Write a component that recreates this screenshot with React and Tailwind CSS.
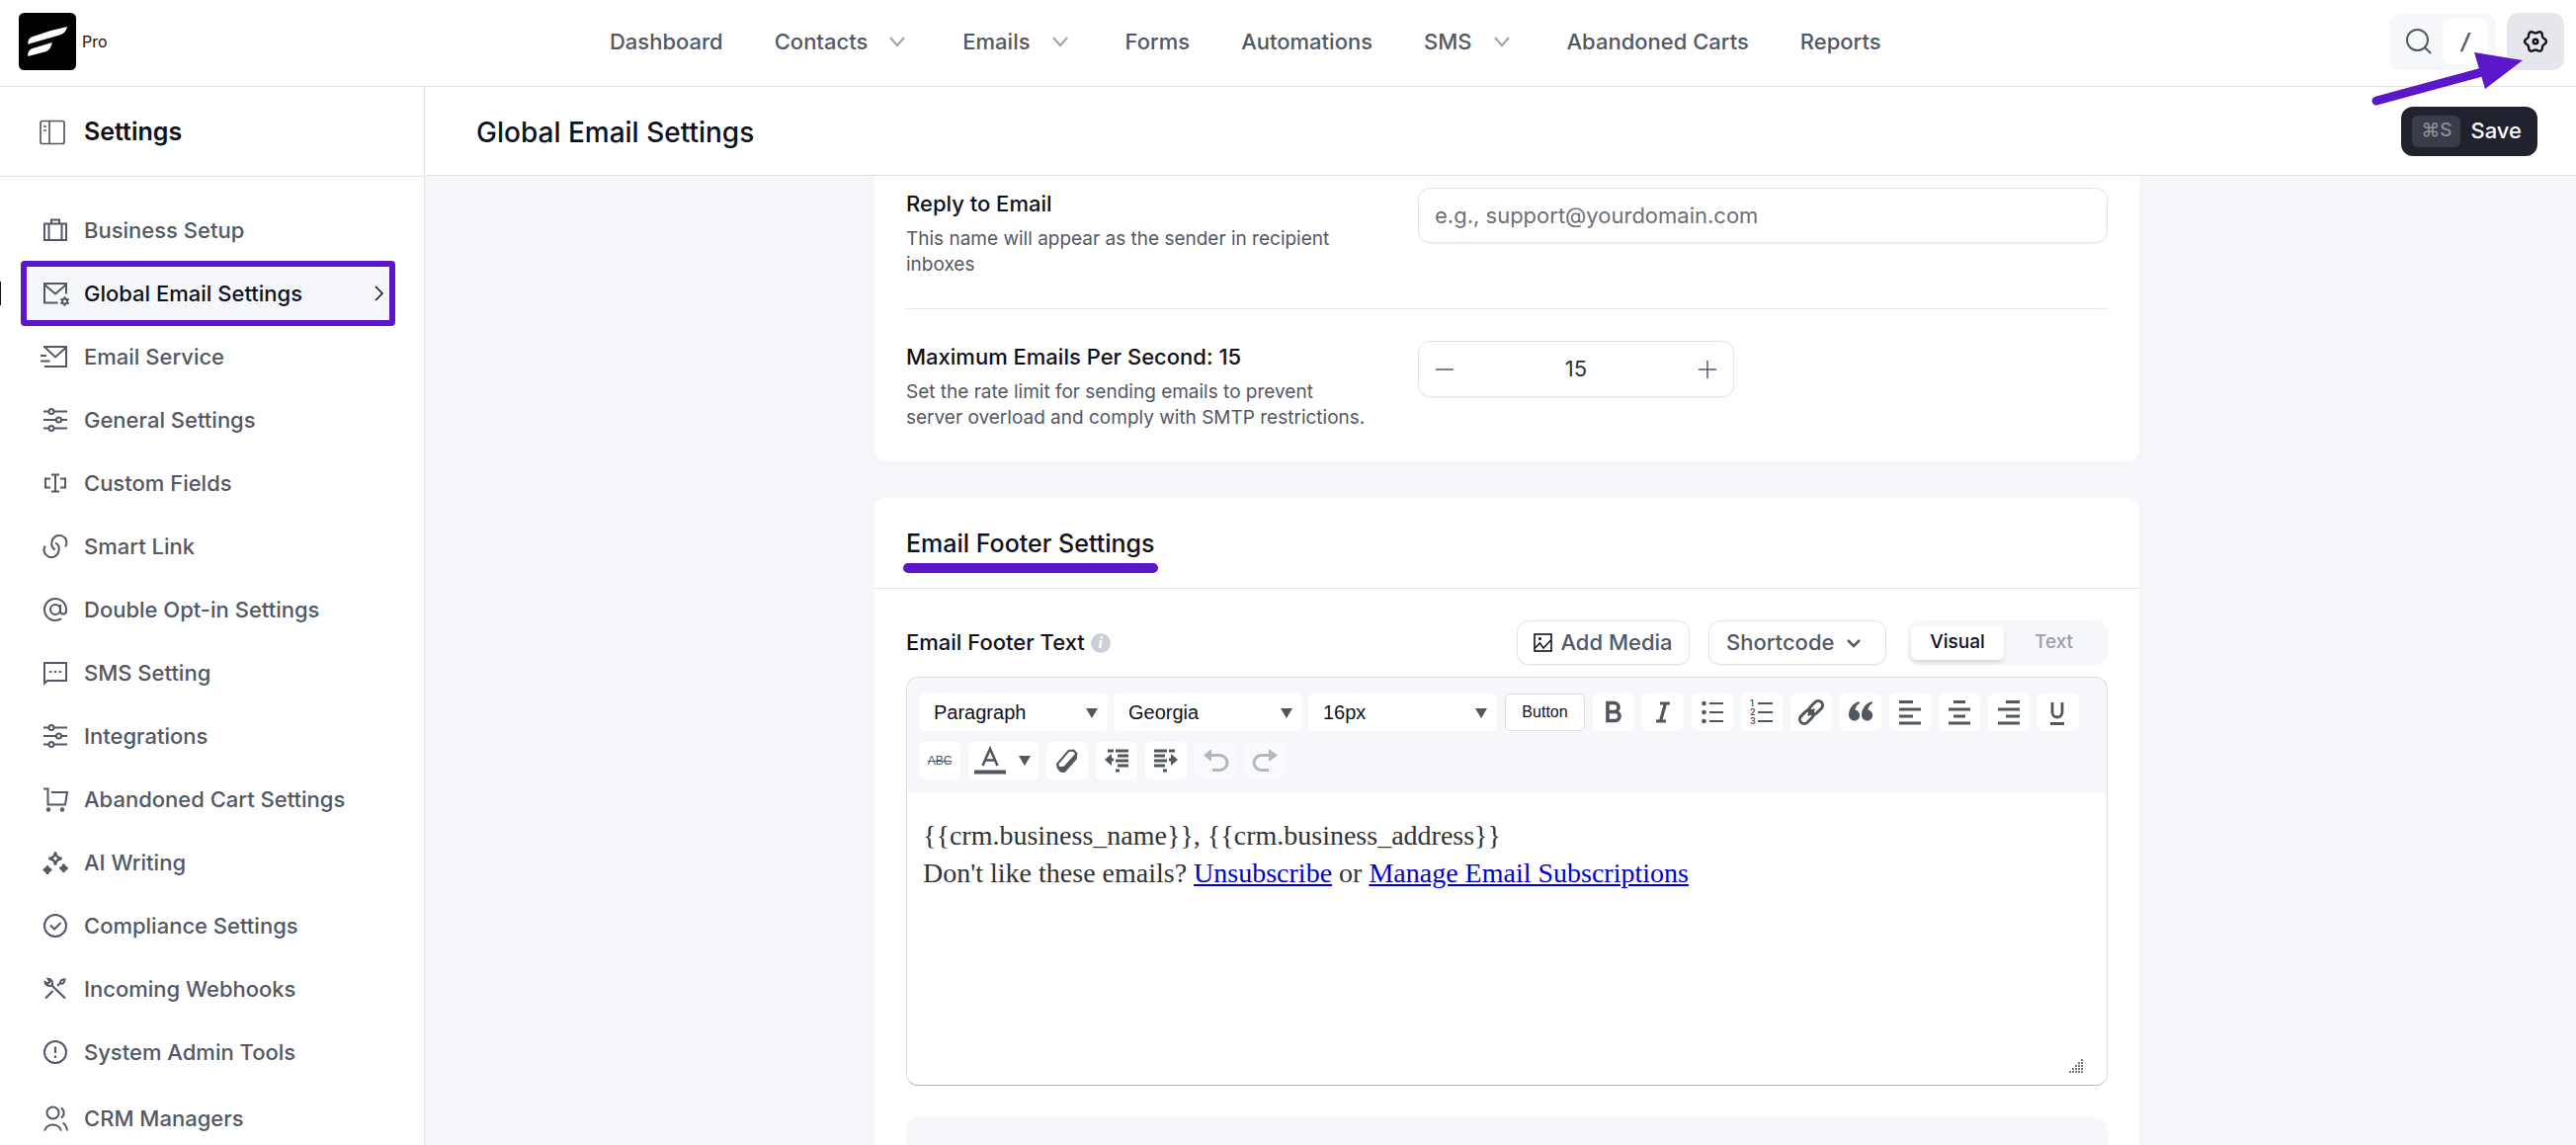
import { useState } from 'react'

function Icon({ children, className = 'size-6', strokeWidth = 2, viewBox = '0 0 24 24' }) {
  return (
    <svg
      className={`shrink-0 overflow-visible ${className}`}
      viewBox={viewBox}
      fill="none"
      stroke="currentColor"
      strokeWidth={strokeWidth}
      aria-hidden="true"
    >
      {children}
    </svg>
  )
}

// Builds the wavy outline of a six-toothed gear
function gearPath(cx, cy, radius, depth) {
  const points = []
  for (let i = 0; i < 72; i++) {
    const angle = (i / 72) * Math.PI * 2
    const r = radius + depth * Math.cos(angle * 6)
    points.push(`${(cx + r * Math.cos(angle)).toFixed(2)} ${(cy + r * Math.sin(angle)).toFixed(2)}`)
  }
  return `M${points.join('L')}Z`
}

const sliders = (
  <>
    <path d="M0 3.5h5.5M10.5 3.5H24M0 12h13M18 12h6M0 20.5h5.5M10.5 20.5H24" />
    <circle cx="8" cy="3.5" r="2.5" />
    <circle cx="15.5" cy="12" r="2.5" />
    <circle cx="8" cy="20.5" r="2.5" />
  </>
)

const menuItems = [
  {
    label: 'Business Setup',
    icon: <path d="M1 5.5h22v16.5H1zM5.5 5.5V22M18.5 5.5V22M8 5.5v-4h8v4" />,
  },
  {
    label: 'Global Email Settings',
    active: true,
    icon: (
      <>
        <path d="M14.5 21.5H1V2h22v10.5M1 3l11 9.5L23 3" />
        <circle cx="21.5" cy="20" r="2.6" />
        <path d="M21.5 15.3v2M21.5 22.7v2M17.4 17.6l1.8 1M23.8 21.4l1.8 1M17.4 22.4l1.8-1M23.8 18.6l1.8-1" />
      </>
    ),
  },
  {
    label: 'Email Service',
    icon: <path d="M0 2h23v20H1M1.500 2.500l10.500 10L23 2.500M-3 11h6M-3 16.500h9.500" />,
  },
  { label: 'General Settings', icon: sliders },
  {
    label: 'Custom Fields',
    icon: <path d="M7 7.500H2v9h5M17 7.500h5v9h-5M12 3.500v17M8 3.500h8M8 20.500h8" />,
  },
  {
    label: 'Smart Link',
    icon: (
      <>
        <path d="M22.300 12.500A7.500 7.500 0 1 0 8.600 7.200C7.600 10.500 8.500 13.500 11.800 15.500" />
        <path d="M1.700 11.500A7.500 7.500 0 1 0 15.400 16.800C16.400 13.500 15.500 10.500 12.200 8.500" />
      </>
    ),
  },
  {
    label: 'Double Opt-in Settings',
    icon: (
      <>
        <circle cx="12" cy="12" r="5" />
        <path d="M17 7v6.500a3 3 0 0 0 6 0V12a11 11 0 1 0-5 9.200" />
      </>
    ),
  },
  {
    label: 'SMS Setting',
    icon: (
      <>
        <path d="M1 22.500V2h22v18H4z" />
        <path d="M6 11h2.200M10.900 11h2.200M15.800 11H18" strokeWidth={2.2} />
      </>
    ),
  },
  { label: 'Integrations', icon: sliders },
  {
    label: 'Abandoned Cart Settings',
    icon: (
      <>
        <path d="M0 1.500h4.500V17.500H22L24 5H8" />
        <circle cx="5" cy="22.500" r="1.200" />
        <circle cx="19" cy="22.500" r="1.200" />
      </>
    ),
  },
  {
    label: 'AI Writing',
    icon: (
      <>
        <path d="M12 1.500c.8 4.500 2 5.700 6.500 6.500-4.500.8-5.700 2-6.500 6.500-.8-4.500-2-5.700-6.500-6.500 4.500-.8 5.700-2 6.500-6.500z" strokeWidth={2.400} />
        <path
          d="M4 15.500c.6 2.800 1.300 3.500 4.100 4.100-2.800.6-3.500 1.300-4.100 4.100-.6-2.800-1.300-3.500-4.100-4.100 2.800-.6 3.500-1.300 4.100-4.100zM20.500 13.700c.6 2.800 1.300 3.500 4.100 4.100-2.800.6-3.500 1.300-4.100 4.100-.6-2.800-1.300-3.500-4.100-4.100 2.800-.6 3.500-1.300 4.100-4.100z"
          fill="currentColor"
        />
      </>
    ),
  },
  {
    label: 'Compliance Settings',
    icon: (
      <>
        <circle cx="12" cy="12" r="11" />
        <path d="M7 11.500l4 4 6.500-6.500" />
      </>
    ),
  },
  {
    label: 'Incoming Webhooks',
    icon: (
      <>
        <path d="M8 8l14 13.500M2 21.500l7.500-7.500" strokeWidth={2.2} />
        <path d="M4.500 1.800A4.500 4.500 0 0 1 8.800 8 4.500 4.500 0 0 1 1.500 5l3 1.700 1.900-1.900z" />
        <path d="M14 9l3-3c0-2 1.500-3.500 4.500-3.700-.2 3-1.700 4.700-4 4.700" />
      </>
    ),
  },
  {
    label: 'System Admin Tools',
    icon: (
      <>
        <circle cx="12" cy="12" r="11" />
        <path d="M12 6.500v6.500M12 15.500v2.500" strokeWidth={2.2} />
      </>
    ),
  },
]

const managerItem = {
  label: 'CRM Managers',
  icon: (
    <>
      <circle cx="9.500" cy="6.500" r="6" />
      <path d="M1 24.500a9 9 0 0 1 17 0M18 1.500a6 6 0 0 1 0 10M19.500 16.500c2.500 1.500 4 4 4.500 8" />
    </>
  ),
}

const topLinks = [
  { label: 'Dashboard' },
  { label: 'Contacts', menu: true },
  { label: 'Emails', menu: true },
  { label: 'Forms' },
  { label: 'Automations' },
  { label: 'SMS', menu: true },
  { label: 'Abandoned Carts' },
  { label: 'Reports' },
]

function TopBar() {
  return (
    <header className="flex h-[88px] shrink-0 items-center justify-between border-b border-[#dfe1e5] bg-white pb-[3px] pl-[19px] pr-3">
      <div className="flex items-center gap-[6px]">
        <svg className="size-[58px]" viewBox="0 0 174 174" aria-label="FluentCRM" role="img">
          <rect width="174" height="174" rx="16" fill="#000" />
          <path d="M28 95V88Q30 76 43 72Q95 52 147 42Q144 60 126 67Z" fill="#fff" />
          <path d="M28 132V124Q30 112 42 108L101 90Q98 110 84 117Z" fill="#fff" />
        </svg>
        <span className="text-[16px] text-[#0e121b]">Pro</span>
      </div>

      <nav className="flex items-center gap-[52px] pr-[6px]">
        {topLinks.map((link) => (
          <a
            key={link.label}
            href="#"
            className="flex items-center gap-4 text-[22px] font-medium text-[#525866]"
          >
            {link.label}
            {link.menu && (
              <Icon className="size-7 text-[#a3a6ad]" strokeWidth={2.2} viewBox="0 0 28 28">
                <path d="M7 10l7 8 7-8" />
              </Icon>
            )}
          </a>
        ))}
      </nav>

      <div className="flex items-center gap-[11px]">
        <button type="button" aria-label="Search" className="flex h-[58px] items-center rounded-xl bg-[#f5f7fa] pl-4 pr-2 text-[#525866]">
          <Icon className="size-7" strokeWidth={2} viewBox="0 0 28 28">
            <circle cx="12.500" cy="12.500" r="10.500" />
            <path d="M20 20l6 6" />
          </Icon>
          <kbd className="ml-[10px] flex h-[46px] w-[46px] items-center justify-center rounded-lg bg-white font-['Inter',sans-serif] text-[22px] font-semibold italic">
            /
          </kbd>
        </button>
        <button type="button" aria-label="Settings" className="flex size-[58px] items-center justify-center rounded-xl bg-[#e5e7ec] text-[#0e121b]">
          <Icon strokeWidth={2.4}>
            <path d={gearPath(12, 12, 9.7, 1.2)} />
            <circle cx="12" cy="12" r="2.300" />
          </Icon>
        </button>
      </div>
    </header>
  )
}

function MenuItem({ item }) {
  return (
    <li>
      <a
        href="#"
        className={`relative flex h-16 items-center pl-[23px] pr-[11px] text-[22px] font-medium ${
          item.active ? 'bg-[#f5f7fa] text-[#0e121b]' : 'text-[#525866]'
        }`}
      >
        <Icon className="size-6 text-[#525866]">{item.icon}</Icon>
        <span className="ml-[17px] flex-1">{item.label}</span>
        {item.active && (
          <>
            <Icon className="h-4 w-[10px]" strokeWidth={1.5} viewBox="0 0 10 16">
              <path d="M1 1l7 7-7 7" />
            </Icon>
            <span className="absolute -left-[21px] top-5 h-6 w-px bg-[#0e121b]" />
            <span className="absolute inset-x-0 -inset-y-px rounded-[4px] border-[6px] border-[#5b17c9]" />
          </>
        )}
      </a>
    </li>
  )
}

function Sidebar() {
  return (
    <aside className="flex w-[430px] shrink-0 flex-col border-r border-[#dfe1e5] bg-white">
      <div className="flex h-[91px] shrink-0 items-center gap-[19px] border-b border-[#dfe1e5] pl-10 pt-[2px] text-[#0e121b]">
        <Icon className="size-[26px] text-[#525866]" strokeWidth={1.7} viewBox="0 0 26 26">
          <rect x="1" y="1.500" width="24" height="23" rx="2" />
          <path d="M10 1.500v23M4 7h3M4 11h3" />
        </Icon>
        <h2 className="text-[25px] font-semibold">Settings</h2>
      </div>
      <ul className="pl-[21px] pr-[29px] pt-[22px]">
        {menuItems.map((item) => (
          <MenuItem key={item.label} item={item} />
        ))}
      </ul>
      <ul className="pl-[21px] pr-[29px] pt-[3px]">
        <MenuItem item={managerItem} />
      </ul>
    </aside>
  )
}

function SettingRow({ id, label, help, children, className }) {
  return (
    <div className={`grid grid-cols-[470px_1fr] gap-12 ${className}`}>
      <div>
        <label htmlFor={id} className="block text-[22px] font-medium leading-8 text-[#0e121b]">
          {label}
        </label>
        <p className="mt-[7px] text-[19px] leading-[26px] text-[#525866]">{help}</p>
      </div>
      <div>{children}</div>
    </div>
  )
}

function RateStepper({ value, onChange }) {
  return (
    <div className="flex h-[57px] w-[320px] items-center rounded-xl border border-[#e1e4ea] px-[17px] text-[#525866] shadow-xs">
      <button type="button" aria-label="Decrease" onClick={() => onChange(Math.max(1, value - 1))}>
        <Icon className="size-[18px]" strokeWidth={1.5} viewBox="0 0 18 18">
          <path d="M0 9h18" />
        </Icon>
      </button>
      <input
        id="rate"
        value={value}
        onChange={(e) => onChange(Number(e.target.value) || 1)}
        className="min-w-0 flex-1 text-center text-[22px] text-[#2b303b] outline-none"
      />
      <button type="button" aria-label="Increase" onClick={() => onChange(value + 1)}>
        <Icon className="size-[18px]" strokeWidth={1.5} viewBox="0 0 18 18">
          <path d="M0 9h18M9 0v18" />
        </Icon>
      </button>
    </div>
  )
}

function ToolSelect({ label, options }) {
  return (
    <div className="relative">
      <select
        aria-label={label}
        className="h-[38px] w-[191px] appearance-none rounded-md bg-white pl-[15px] font-['Liberation_Sans',sans-serif] text-[20px] text-[#0e121b]"
      >
        {options.map((option) => (
          <option key={option}>{option}</option>
        ))}
      </select>
      <svg className="pointer-events-none absolute right-[10px] top-[15px] h-[10px] w-3" viewBox="0 0 12 10" aria-hidden="true">
        <path d="M0 0h12L6 10z" fill="#50575e" />
      </svg>
    </div>
  )
}

function ToolButton({ label, disabled, children }) {
  return (
    <button
      type="button"
      aria-label={label}
      disabled={disabled}
      className={`flex h-[38px] w-[42px] items-center justify-center rounded-md ${
        disabled ? 'bg-[#f8f9fb] text-[#b4b7bc]' : 'bg-white text-[#50575e]'
      }`}
    >
      {children}
    </button>
  )
}

const formatTools = [
  { label: 'Bold', icon: <path d="M6 2.500h6.500a4 4 0 0 1 0 9H6zM6 11.500h7.500a4.500 4.500 0 0 1 0 9H6z" strokeWidth={3.600} /> },
  { label: 'Italic', icon: <path d="M9 3h10M5 21h10M14.500 3l-5 18" strokeWidth={3.200} /> },
  {
    label: 'Bulleted list',
    icon: (
      <>
        <path d="M9 3h14M9 12h14M9 21h14" strokeWidth={2} />
        <g fill="currentColor" stroke="none">
          <circle cx="3.500" cy="3" r="2.300" />
          <circle cx="3.500" cy="12" r="2.300" />
          <circle cx="3.500" cy="21" r="2.300" />
        </g>
      </>
    ),
  },
  {
    label: 'Numbered list',
    icon: (
      <>
        <path d="M8 3h15M8 12h15M8 21h15" strokeWidth={2} />
        <g fill="currentColor" stroke="none" fontSize="9" fontWeight="600">
          <text x="0" y="6">1</text>
          <text x="0" y="15">2</text>
          <text x="0" y="24">3</text>
        </g>
      </>
    ),
  },
  {
    label: 'Link',
    icon: (
      <g transform="rotate(-45 12 12)" strokeWidth={3}>
        <rect x="-2.500" y="7.500" width="16" height="9" rx="4.500" />
        <rect x="10.500" y="7.500" width="16" height="9" rx="4.500" />
        <path d="M7.500 12h9" strokeWidth={2.500} />
      </g>
    ),
  },
  {
    label: 'Blockquote',
    icon: (
      <path
        d="M10.500 1C4 3 0 8.500 0 15a5.600 5.600 0 1 0 6.500-5.500C6.500 7 8 4.500 11 3zM23.500 1C17 3 13 8.500 13 15a5.600 5.600 0 1 0 6.500-5.500c0-2.500 1.500-5 4.500-6.500z"
        fill="currentColor"
        stroke="none"
      />
    ),
  },
  { label: 'Align left', icon: <path d="M1 1.500h14M1 9h22M1 16h14M1 23h22" strokeWidth={3} /> },
  { label: 'Align center', icon: <path d="M6 1.500h12M1 9h22M6 16h12M1 23h22" strokeWidth={3} /> },
  { label: 'Align right', icon: <path d="M9 1.500h14M1 9h22M9 16h14M1 23h22" strokeWidth={3} /> },
  { label: 'Underline', icon: <path d="M6 2v10a5 5 0 0 0 10 0V2M4 23.500h14" strokeWidth={2.800} /> },
]

function Toolbar() {
  return (
    <div className="flex flex-col gap-[11px] rounded-t-xl bg-[#f5f7fa] px-3 pb-[14px] pt-4">
      <div className="flex items-center gap-2">
        <div className="flex gap-[6px]">
          <ToolSelect label="Block format" options={['Paragraph', 'Heading 1', 'Heading 2']} />
          <ToolSelect label="Font family" options={['Georgia', 'Arial', 'Verdana']} />
          <ToolSelect label="Font size" options={['16px', '14px', '18px']} />
        </div>
        <button type="button" className="h-[38px] w-[81px] rounded-md border border-[#dcdde1] bg-white font-['Liberation_Sans',sans-serif] text-[16px] text-[#0e121b]">
          Button
        </button>
        {formatTools.map((tool) => (
          <ToolButton key={tool.label} label={tool.label}>
            <Icon>{tool.icon}</Icon>
          </ToolButton>
        ))}
      </div>

      <div className="flex items-center gap-2">
        <ToolButton label="Strikethrough">
          <span className="font-['Liberation_Sans',sans-serif] text-[12px] line-through">ABC</span>
        </ToolButton>
        <button type="button" aria-label="Text color" className="flex h-[38px] w-[71px] items-center justify-between rounded-md bg-white px-[6px] text-[#50575e]">
          <Icon className="h-7 w-8" strokeWidth={2.600} viewBox="0 0 32 28">
            <path d="M8.500 19L16 2l7.500 17M11 13.500h10" />
            <path d="M0 25.500h32" strokeWidth={4} />
          </Icon>
          <svg className="mr-[2px] h-[10px] w-3" viewBox="0 0 12 10" aria-hidden="true">
            <path d="M0 0h12L6 10z" fill="currentColor" />
          </svg>
        </button>
        <ToolButton label="Clear formatting">
          <Icon strokeWidth={2}>
            <path d="M2 15.500L13.500 2l5-.5 3 3.500-12 13.500-5.500 1z" strokeLinejoin="round" />
            <path d="M2 15.500l2 3.500 5.500-.5L21.500 5v5L9.500 23.500l-4.500-.5-3-4z" fill="currentColor" strokeWidth={1} />
          </Icon>
        </ToolButton>
        <ToolButton label="Decrease indent">
          <Icon strokeWidth={2.800}>
            <path d="M11 2h13M13 7h11M11 12h13M13 17h11M11 22h4M3 2h6M9 11H4" />
            <path d="M7 5v12l-7-6z" fill="currentColor" stroke="none" />
          </Icon>
        </ToolButton>
        <ToolButton label="Increase indent">
          <Icon strokeWidth={2.800}>
            <path d="M0 2h13M0 7h11M0 12h13M0 17h11M9 22h4M15 2h6M15 11h5" />
            <path d="M17 5v12l7-6z" fill="currentColor" stroke="none" />
          </Icon>
        </ToolButton>
        <ToolButton label="Undo" disabled>
          <Icon strokeWidth={3}>
            <path d="M6 6.500h10.500a7 7 0 0 1 0 15H9" />
            <path d="M8 0v13L0 6.500z" fill="currentColor" stroke="none" />
          </Icon>
        </ToolButton>
        <ToolButton label="Redo" disabled>
          <Icon strokeWidth={3}>
            <path d="M18 6.500H8.500a7 7 0 0 0 0 15H16" />
            <path d="M16 0v13l9-6.500z" fill="currentColor" stroke="none" />
          </Icon>
        </ToolButton>
      </div>
    </div>
  )
}

function ResizeGrip() {
  const dots = []
  for (let row = 0; row < 5; row++) {
    for (let col = 4 - row; col < 5; col++) {
      dots.push(<rect key={`${row}-${col}`} x={col * 3} y={row * 3} width="2" height="2" />)
    }
  }
  return (
    <svg className="absolute bottom-3 right-6 size-[14px]" viewBox="0 0 14 14" fill="#777" aria-hidden="true">
      {dots}
    </svg>
  )
}

function FooterEditor() {
  return (
    <div className="mt-3 rounded-xl border border-[#dcdde1] border-b-[#b4b6ba]">
      <Toolbar />
      <div className="relative min-h-[295px] rounded-b-xl bg-white px-4 pt-6 font-['Liberation_Serif',serif] text-[28px] leading-[38px] text-[#333]">
        <p>{'{{crm.business_name}}, {{crm.business_address}}'}</p>
        <p>
          Don't like these emails?{' '}
          <a href="#" className="text-[#0000cc] underline">Unsubscribe</a> or{' '}
          <a href="#" className="text-[#0000cc] underline">Manage Email Subscriptions</a>
        </p>
        <ResizeGrip />
      </div>
    </div>
  )
}

const outlineButton =
  'flex h-[45px] items-center rounded-xl border border-[#e1e4ea] bg-white text-[22px] font-medium text-[#525866] shadow-xs'

function FooterCard() {
  return (
    <section className="mt-[37px] rounded-xl bg-white">
      <div className="flex h-[92px] items-center border-b border-[#e1e4ea] px-8 pt-[3px]">
        <h2 className="relative text-[25px] font-medium text-[#0e121b]">
          Email Footer Settings
          <span className="absolute -inset-x-[3px] top-[38px] h-[10px] rounded-full bg-[#5b17c9]" />
        </h2>
      </div>
      <div className="px-8 pt-8">
        <div className="flex items-center">
          <h3 className="text-[22px] font-medium text-[#0e121b]">Email Footer Text</h3>
          <span className="ml-[6px] flex size-5 items-center justify-center rounded-full bg-[#cacfd8] font-['Liberation_Serif',serif] text-[16px] font-bold italic text-white">
            i
          </span>
          <button type="button" className={`${outlineButton} ml-auto w-[175px] justify-center gap-2`}>
            <Icon className="size-[19px] text-[#0e121b]" strokeWidth={1.600} viewBox="0 0 19 19">
              <rect x="1" y="1" width="17" height="17" />
              <path d="M1.500 15l5-5 3.500 5 7.500-8" />
              <circle cx="6.500" cy="5.500" r=".8" />
            </Icon>
            Add Media
          </button>
          <button type="button" className={`${outlineButton} ml-[19px] w-[180px] pl-[17px] gap-3`}>
            Shortcode
            <Icon className="h-5 w-[16px]" strokeWidth={2.500} viewBox="0 0 16 20">
              <path d="M2 7l6 6 6-6" />
            </Icon>
          </button>
          <div className="ml-[21px] flex h-[45px] w-[203px] items-center rounded-xl bg-[#f5f7fa] px-1 text-[19px] font-medium">
            <button type="button" className="h-[34px] w-[94px] rounded-md bg-white text-[#0e121b] shadow-md">
              Visual
            </button>
            <button type="button" className="flex-1 text-[#99a0ae]">
              Text
            </button>
          </div>
        </div>
        <FooterEditor />
        <div className="mt-8 h-20 rounded-xl bg-[#f5f7fa]" />
      </div>
    </section>
  )
}

export default function App() {
  const [rate, setRate] = useState(15)

  return (
    <div className="relative flex h-screen flex-col overflow-hidden bg-white font-['Inter',sans-serif]">
      <TopBar />
      <div className="flex min-h-0 flex-1">
        <Sidebar />
        <main className="flex min-w-0 flex-1 flex-col">
          <div className="flex h-[90px] shrink-0 items-center justify-between border-b border-[#dfe1e5] bg-white pl-[52px] pr-[39px]">
            <h1 className="pt-[2px] text-[28px] font-medium text-[#0e121b]">Global Email Settings</h1>
            <button type="button" className="flex h-[50px] items-center gap-[10px] rounded-xl bg-[#20232d] pl-[11px] pr-4 text-[22px] font-medium text-white">
              <kbd className="flex h-8 w-[49px] items-center justify-center rounded-md bg-[#3a3d48] font-['Inter',sans-serif] text-[19px] text-[#8b8f9a]">
                ⌘S
              </kbd>
              Save
            </button>
          </div>

          <div className="min-h-0 flex-1 overflow-hidden bg-[#f5f6fa] pl-[13px]">
            <div className="mx-auto max-w-[1280px]">
              <section className="rounded-b-xl bg-white px-8">
                <SettingRow
                  id="reply-to"
                  label="Reply to Email"
                  help="This name will appear as the sender in recipient inboxes"
                  className="border-b border-[#e1e4ea] pb-[31px] pt-3"
                >
                  <input
                    id="reply-to"
                    type="email"
                    placeholder="e.g., support@yourdomain.com"
                    className="h-14 w-full rounded-xl border border-[#e1e4ea] px-4 text-[22px] shadow-xs outline-none placeholder:text-[#6b6f78]"
                  />
                </SettingRow>
                <SettingRow
                  id="rate"
                  label={`Maximum Emails Per Second: ${rate}`}
                  help="Set the rate limit for sending emails to prevent server overload and comply with SMTP restrictions."
                  className="pb-[31px] pt-8"
                >
                  <RateStepper value={rate} onChange={setRate} />
                </SettingRow>
              </section>
              <FooterCard />
            </div>
          </div>
        </main>
      </div>

      {/* Callout arrow pointing at the settings button */}
      <svg className="pointer-events-none absolute right-[54px] top-[50px] h-[60px] w-[153px]" viewBox="0 0 153 60" aria-hidden="true">
        <path d="M5 52L112 23" stroke="#5b17c9" strokeWidth="9" strokeLinecap="round" />
        <path d="M104 3L153 11L115 40Z" fill="#5b17c9" />
      </svg>
    </div>
  )
}
